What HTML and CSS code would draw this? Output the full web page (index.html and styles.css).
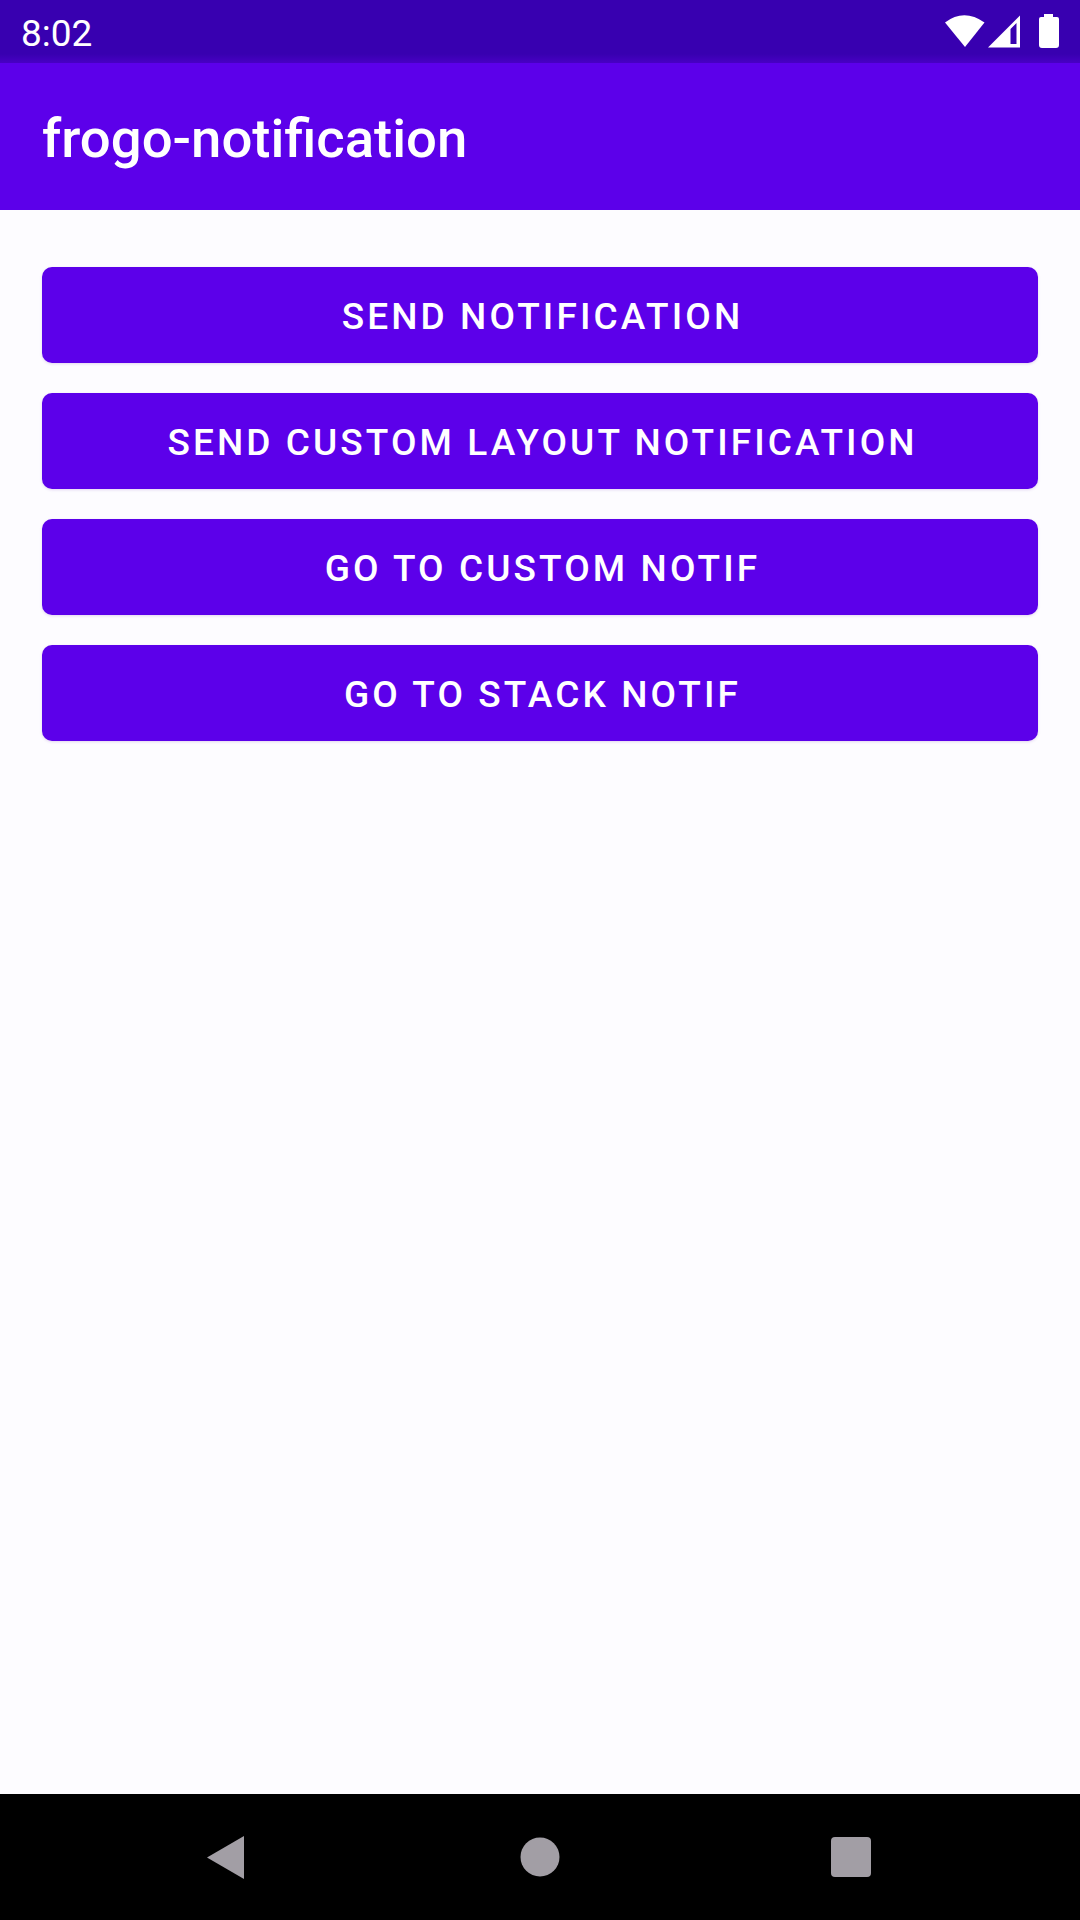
FILE: index.html
```html
<!DOCTYPE html>
<html lang="en">
<head>
<meta charset="utf-8">
<title>frogo-notification</title>
<link rel="stylesheet" href="styles.css">
</head>
<body>
<div class="status-bar">
  <span class="clock">8:02</span>
  <svg class="status-icons" width="120" height="40" viewBox="0 0 120 40" fill="#fff">
    <path d="M5 10.500Q24 -4 44.500 10.500L25 35Z"/>
    <path fill-rule="evenodd" d="M48 35.500L80 3.500V35.500ZM70.500 17V32H76.500V11Z"/>
    <path d="M104 2H113V5H117Q119 5 119 7V33Q119 36 116 36H102Q99 36 99 33V7Q99 5 101 5H104Z"/>
  </svg>
</div>
<header class="app-bar"><h1 class="title">frogo-notification</h1></header>
<main class="content">
  <button class="button">SEND NOTIFICATION</button>
  <button class="button">SEND CUSTOM LAYOUT NOTIFICATION</button>
  <button class="button">GO TO CUSTOM NOTIF</button>
  <button class="button">GO TO STACK NOTIF</button>
</main>
<nav class="nav-bar">
  <svg width="1080" height="126" viewBox="0 0 1080 126" fill="#a29ea5">
    <path d="M207 63.500L244 42V85Z"/>
    <circle cx="540" cy="63" r="19.500"/>
    <rect x="831" y="43" width="40" height="40" rx="4"/>
  </svg>
</nav>
</body>
</html>
```
FILE: styles.css
```css
* { box-sizing: border-box; }
body {
  margin: 0;
  width: 1080px;
  height: 1920px;
  display: flex;
  flex-direction: column;
  background: #fdfcff;
  font-family: Roboto, sans-serif;
  color: #fff;
  overflow: hidden;
}
.status-bar {
  height: 63px;
  padding: 0 20px 0 21px;
  display: flex;
  align-items: center;
  justify-content: space-between;
  background: linear-gradient(#3800b0 54px, #4800c4);
}
.clock { font-size: 37px; line-height: 44px; padding-top: 4px; }
.status-icons { display: block; }
.app-bar {
  height: 147px;
  padding: 2px 0 0 42px;
  display: flex;
  align-items: center;
  background: #5c00ea;
}
.title { margin: 0; font-size: 54.5px; font-weight: 500; line-height: 62px; }
.content {
  flex: 1;
  padding: 57px 42px 0;
  display: flex;
  flex-direction: column;
  gap: 30px;
}
.button {
  height: 96px;
  border: 0;
  padding: 3px 0 0 5px;
  border-radius: 10px;
  background: #5c00ea;
  color: #fff;
  font: 500 37px/44px Roboto, sans-serif;
  letter-spacing: 3.1px;
  box-shadow: 0 1px 3px rgba(90, 0, 160, .16);
}
.nav-bar { height: 126px; background: #000; }
.nav-bar svg { display: block; }
```
